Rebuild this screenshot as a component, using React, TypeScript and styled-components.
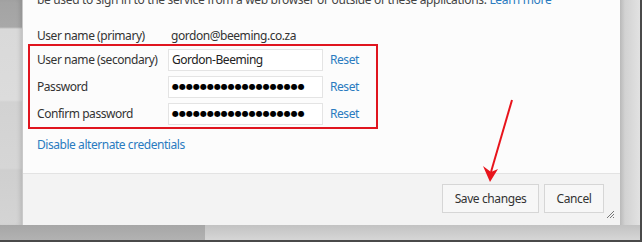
import React from "react";
import styled, { createGlobalStyle } from "styled-components";

const Global = createGlobalStyle`
  html, body { margin: 0; padding: 0; background: #ffffff; }
  body { font-family: "Noto Sans", "Open Sans", sans-serif; }
`;

const Frame = styled.div`
  position: relative;
  width: 640px;
  height: 240px;
  border-right: 2px solid #4a4a4a;
  border-bottom: 2px solid #4a4a4a;
  display: grid;
  grid-template-columns: 22px 598px 20px;
  grid-template-rows: 225px 15px;
  overflow: hidden;
`;

const LeftStrip = styled.div`
  background: linear-gradient(
    to bottom,
    #a3a3a3 0px,
    #a8a8a8 27px,
    #d9d9d9 29px,
    #dcdcdc 100px,
    #d2d2d2 102px,
    #d6d6d6 168px,
    #cfcfcf 170px,
    #d4d4d4 225px
  );
  box-shadow: inset -4px 0 4px -2px rgba(0, 0, 0, 0.12);
`;

const RightStrip = styled.div`
  background: linear-gradient(to right, #b9b9b9 0px, #d2d2d2 5px, #e2e2e2 20px);
`;

const BottomStrip = styled.div`
  grid-column: 1 / span 3;
  display: grid;
  grid-template-columns: 205px 1fr;
  & > div:first-child {
    background: linear-gradient(to bottom, #a6a6a6, #b2b2b2);
  }
  & > div:last-child {
    background: linear-gradient(to bottom, #c2c2c2, #d6d6d6);
  }
`;

const Dialog = styled.div`
  position: relative;
  display: grid;
  grid-template-rows: 173px 52px;
  border-left: 1px solid #c9c9c9;
  overflow: hidden;
  color: #333333;
  font-size: 12px;
  letter-spacing: -0.45px;
`;

const Body = styled.div`
  background: #fcfcfc;
  padding: 0 0 0 5px;
  display: flex;
  flex-direction: column;
  overflow: hidden;
`;

const Intro = styled.p`
  margin: -9px 0 0 9px;
  line-height: 18px;
  white-space: nowrap;
  color: #444444;
  letter-spacing: -0.33px;
`;

const Link = styled.a`
  color: #2a7bc0;
  text-decoration: none;
  cursor: pointer;
`;

const Row = styled.div<{ $h: number }>`
  display: grid;
  grid-template-columns: 124px 155px auto;
  column-gap: 7px;
  align-items: center;
  height: ${(p) => p.$h}px;
`;

const PrimaryRow = styled(Row)`
  margin-top: 16px;
  padding-left: 9px;
`;

const Label = styled.span`
  white-space: nowrap;
`;

const Value = styled.span`
  padding-left: 3px;
  white-space: nowrap;
`;

const Highlight = styled.div`
  box-sizing: border-box;
  width: 350px;
  margin-top: -1px;
  border: 2px solid #e0151f;
  padding-left: 7px;
  display: flex;
  flex-direction: column;
`;

const Input = styled.div<{ $secret?: boolean }>`
  box-sizing: border-box;
  height: 22px;
  border: 1px solid #e4e4e4;
  background: #ffffff;
  padding-left: 3px;
  display: flex;
  align-items: center;
  color: ${(p) => (p.$secret ? "#000000" : "#222222")};
  white-space: nowrap;
  overflow: hidden;
  font-family: ${(p) => (p.$secret ? '"DejaVu Sans", sans-serif' : "inherit")};
  font-size: ${(p) => (p.$secret ? "8px" : "12px")};
  letter-spacing: ${(p) => (p.$secret ? "0px" : "inherit")};
`;

const Disable = styled(Link)`
  margin: 7px 0 0 9px;
  line-height: 18px;
`;

const Footer = styled.div`
  position: relative;
  background: #f3f3f3;
  border-top: 1px solid #e3e3e3;
  display: flex;
  justify-content: flex-end;
  align-items: flex-start;
  gap: 5px;
  padding: 10px 16px 0 0;
`;

const Button = styled.button<{ $w: number }>`
  box-sizing: border-box;
  width: ${(p) => p.$w}px;
  height: 29px;
  border: 1px solid #d6d6d6;
  background: #f7f7f7;
  color: #333333;
  font-family: "Noto Sans", "Open Sans", sans-serif;
  font-size: 12px;
  letter-spacing: -0.4px;
  padding: 0;
`;

const Grip = styled.svg`
  position: absolute;
  right: 5px;
  bottom: 6px;
`;

const Arrow = styled.svg`
  position: absolute;
  left: 0;
  top: 0;
  pointer-events: none;
`;

const dots = "\u25CF".repeat(19);

export default function App() {
  return (
    <>
      <Global />
      <Frame>
        <LeftStrip />
        <Dialog>
          <Body>
            <Intro>
              be used to sign in to the service from a web browser or outside of these applications.{" "}
              <Link>Learn more</Link>
            </Intro>
            <PrimaryRow $h={20}>
              <Label>User name (primary)</Label>
              <Value>gordon@beeming.co.za</Value>
            </PrimaryRow>
            <Highlight>
              <Row $h={27}>
                <Label>User name (secondary)</Label>
                <Input>Gordon-Beeming</Input>
                <Link>Reset</Link>
              </Row>
              <Row $h={27}>
                <Label>Password</Label>
                <Input $secret>{dots}</Input>
                <Link>Reset</Link>
              </Row>
              <Row $h={27}>
                <Label>Confirm password</Label>
                <Input $secret>{dots}</Input>
                <Link>Reset</Link>
              </Row>
            </Highlight>
            <Disable>Disable alternate credentials</Disable>
          </Body>
          <Footer>
            <Button $w={97}>Save changes</Button>
            <Button $w={60}>Cancel</Button>
            <Grip width="9" height="9" viewBox="0 0 9 9">
              <path d="M8 1 L1 8 M8 4 L4 8 M8 7 L7 8" stroke="#777" strokeWidth="1" />
            </Grip>
          </Footer>
        </Dialog>
        <RightStrip />
        <BottomStrip>
          <div />
          <div />
        </BottomStrip>
        <Arrow width="640" height="240" viewBox="0 0 640 240">
          <line x1="512" y1="100" x2="491" y2="172" stroke="#e8141c" strokeWidth="2" />
          <path d="M483 166 L490 182 L498 169 L491 172 Z" fill="#e8141c" />
        </Arrow>
      </Frame>
    </>
  );
}
